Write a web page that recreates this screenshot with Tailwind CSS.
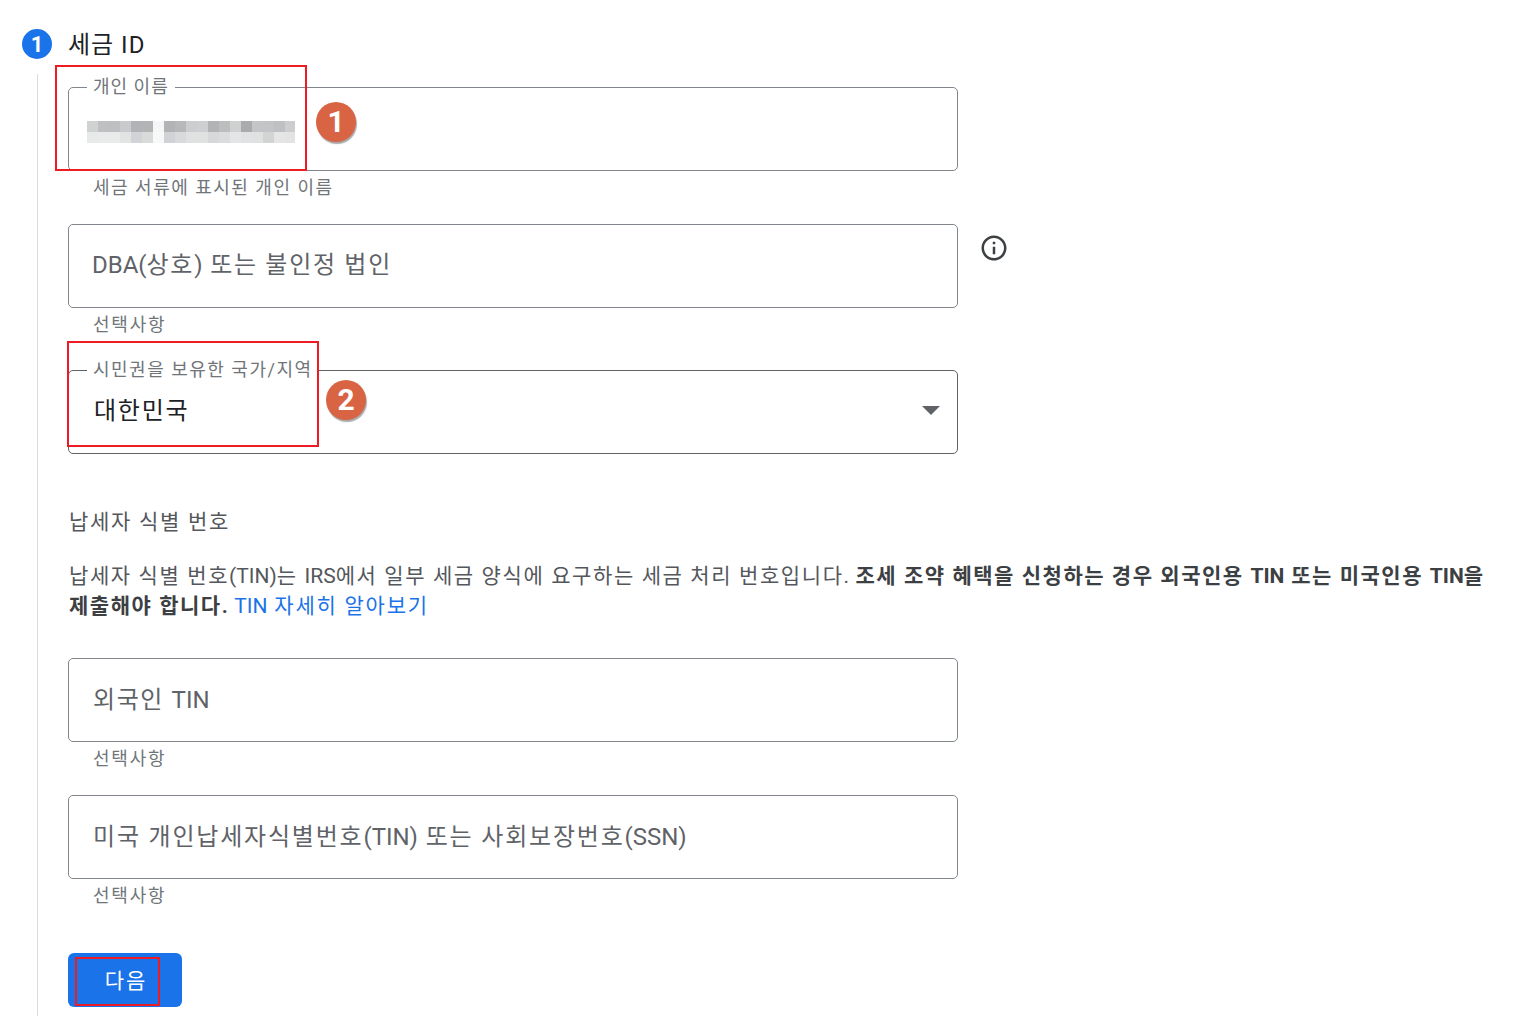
<!DOCTYPE html>
<html lang="ko">
<head>
<meta charset="UTF-8">
<title>세금 ID</title>
<script src="https://cdn.jsdelivr.net/npm/@tailwindcss/browser@4"></script>
</head>
<body class="bg-white font-['Roboto','Noto_Sans_CJK_KR',sans-serif] text-[#3c4043] overflow-hidden">
<div class="relative w-[1523px] h-[1025px] overflow-hidden">
  <!-- step rail -->
  <div class="absolute left-[37px] top-[74px] w-px h-[942px] bg-[#dadce0]"></div>

  <!-- step header -->
  <div class="flex items-center h-[30px] mt-[29px] ml-[22px]">
    <span class="flex items-center justify-center w-[30px] h-[30px] rounded-full bg-[#1a73e8] text-white text-[22px] font-bold">1</span>
    <h2 class="ml-[16px] pt-px text-[24px] text-[#202124] tracking-[1px]">세금 ID</h2>
  </div>

  <div class="ml-[68px] w-[1420px]">
    <!-- 개인 이름 -->
    <div class="relative w-[890px] h-[84px] mt-[28px] border border-[#80868b] rounded-[5px]">
      <span class="absolute left-[18px] top-[-13px] px-[6px] bg-white text-[18px] leading-[24px] text-[#70757a] tracking-[1px]">개인 이름</span>
      <div class="absolute left-[18px] top-[33px] w-[208px]">
        <div class="flex h-[11px]">
          <i class="w-[11px] bg-[#d0d2d2]"></i><i class="w-[11px] bg-[#bfc0c2]"></i><i class="w-[11px] bg-[#bdbfc0]"></i><i class="w-[11px] bg-[#c8cacc]"></i><i class="w-[11px] bg-[#b2b3b6]"></i><i class="w-[11px] bg-[#b3b4b6]"></i><i class="w-[11px] bg-[#f6f6f6]"></i><i class="w-[11px] bg-[#b2b3b5]"></i><i class="w-[11px] bg-[#b7b8ba]"></i><i class="w-[11px] bg-[#cbcdcf]"></i><i class="w-[11px] bg-[#cdcfd0]"></i><i class="w-[11px] bg-[#b2b3b5]"></i><i class="w-[11px] bg-[#bcbdbf]"></i><i class="w-[11px] bg-[#cfd1d1]"></i><i class="w-[11px] bg-[#aaabad]"></i><i class="w-[11px] bg-[#c3c5c7]"></i><i class="w-[11px] bg-[#c3c4c6]"></i><i class="w-[11px] bg-[#bfc0c2]"></i><i class="w-[10px] bg-[#cbcdce]"></i>
        </div>
        <div class="flex h-[11px]">
          <i class="w-[11px] bg-[#e8e9e9]"></i><i class="w-[11px] bg-[#e9eaea]"></i><i class="w-[11px] bg-[#e9eaea]"></i><i class="w-[11px] bg-[#e2e4e4]"></i><i class="w-[11px] bg-[#d1d3d6]"></i><i class="w-[11px] bg-[#d9dbdb]"></i><i class="w-[11px] bg-[#f8f8f8]"></i><i class="w-[11px] bg-[#d0d2d5]"></i><i class="w-[11px] bg-[#d9dadb]"></i><i class="w-[11px] bg-[#e0e2e2]"></i><i class="w-[11px] bg-[#e0e2e2]"></i><i class="w-[11px] bg-[#d7d8d9]"></i><i class="w-[11px] bg-[#dbdcdc]"></i><i class="w-[11px] bg-[#e4e5e6]"></i><i class="w-[11px] bg-[#e0e2e4]"></i><i class="w-[11px] bg-[#e0e2e2]"></i><i class="w-[11px] bg-[#d2d4d4]"></i><i class="w-[11px] bg-[#e5e5e5]"></i><i class="w-[10px] bg-[#e2e3e3]"></i>
        </div>
      </div>
    </div>
    <p class="pl-[25px] mt-[5px] text-[18px] leading-[24px] text-[#70757a] tracking-[1.5px]">세금 서류에 표시된 개인 이름</p>

    <!-- DBA -->
    <div class="relative mt-[24px] w-[890px]">
      <div class="h-[84px] pl-[23px] pt-[24px] border border-[#80868b] rounded-[5px] text-[24px] leading-[32px] text-[#5f6368] tracking-[1.7px]"><span class="tracking-normal">DBA(</span>상호<span class="tracking-normal">)</span> 또는 불인정 법인</div>
      <svg class="absolute left-[911px] top-[9px] w-[30px] h-[30px]" viewBox="0 0 24 24" fill="#3c4043"><path d="M11 7h2v2h-2zm0 4h2v6h-2zm1-9C6.48 2 2 6.48 2 12s4.48 10 10 10 10-4.48 10-10S17.52 2 12 2zm0 18c-4.41 0-8-3.59-8-8s3.59-8 8-8 8 3.59 8 8-3.59 8-8 8z"/></svg>
    </div>
    <p class="pl-[25px] mt-[5px] text-[18px] leading-[24px] text-[#70757a] tracking-[1.8px]">선택사항</p>

    <!-- 국가 -->
    <div class="relative w-[890px] h-[84px] mt-[33px] border border-[#5f6368] rounded-[5px]">
      <span class="absolute left-[18px] top-[-13px] px-[6px] bg-white text-[18px] leading-[24px] text-[#70757a] tracking-[1.5px] whitespace-nowrap">시민권을 보유한 국가/지역</span>
      <span class="absolute left-[25px] top-[24px] text-[24px] leading-[32px] text-[#202124] tracking-[1.75px]">대한민국</span>
      <span class="absolute right-[17px] top-[35px] w-0 h-0 border-x-[9px] border-x-transparent border-t-[9px] border-t-[#5f6368]"></span>
    </div>

    <!-- TIN -->
    <h3 class="mt-[54px] pl-px text-[21px] leading-[28px] font-normal text-[#54575b] tracking-[1.7px]">납세자 식별 번호</h3>
    <p class="mt-[25px] pl-px text-[21px] leading-[30px] text-[#54575b] tracking-[1.6px]">납세자 식별 번호<span class="tracking-normal">(TIN)</span>는 <span class="tracking-normal">IRS</span>에서 일부 세금 양식에 요구하는 세금 처리 번호입니다. <b class="-ml-[2px] font-bold text-[#3c4043] tracking-[1.53px]">조세 조약 혜택을 신청하는 경우 외국인용 <span class="tracking-normal">TIN</span> 또는 미국인용 <span class="tracking-normal">TIN</span>을 제출해야 합니다.</b> <a class="-ml-[2px] text-[#1a73e8] tracking-[1.75px]"><span class="tracking-normal">TIN</span> 자세히 알아보기</a></p>

    <div class="flex items-center w-[890px] h-[84px] mt-[37px] pl-[24px] border border-[#80868b] rounded-[5px] text-[24px] text-[#5f6368] tracking-[1.6px]">외국인&nbsp;<span class="tracking-normal">TIN</span></div>
    <p class="pl-[25px] mt-[5px] text-[18px] leading-[24px] text-[#70757a] tracking-[1.8px]">선택사항</p>

    <div class="h-[84px] w-[890px] mt-[24px] pl-[24px] pt-[25px] border border-[#80868b] rounded-[5px] text-[24px] leading-[32px] text-[#5f6368] tracking-[1.8px]">미국 개인납세자식별번호<span class="tracking-normal">(TIN)</span> 또는 사회보장번호<span class="tracking-normal">(SSN)</span></div>
    <p class="pl-[25px] mt-[5px] text-[18px] leading-[24px] text-[#70757a] tracking-[1.8px]">선택사항</p>

    <button class="block w-[114px] h-[54px] mt-[45px] pt-[3px] pl-[2px] rounded-[6px] bg-[#1a73e8] text-white text-[21px] tracking-[2px]">다음</button>
  </div>

  <!-- annotations -->
  <div class="absolute left-[55px] top-[65px] w-[252px] h-[106px] border-2 border-[#ed1c24]"></div>
  <div class="absolute left-[67px] top-[341px] w-[252px] h-[106px] border-2 border-[#ed1c24]"></div>
  <div class="absolute left-[75px] top-[957px] w-[85px] h-[49px] border-2 border-[#ed1c24]"></div>
  <span class="absolute left-[316px] top-[102px] flex items-center justify-center w-[40px] h-[40px] pb-[2px] rounded-full bg-[#d96444] text-white text-[30px] font-bold shadow-[1px_2px_1px_#a9a9a9]">1</span>
  <span class="absolute left-[326px] top-[380px] flex items-center justify-center w-[40px] h-[40px] pb-[2px] rounded-full bg-[#d96444] text-white text-[30px] font-bold shadow-[1px_2px_1px_#a9a9a9]">2</span>
</div>
</body>
</html>
